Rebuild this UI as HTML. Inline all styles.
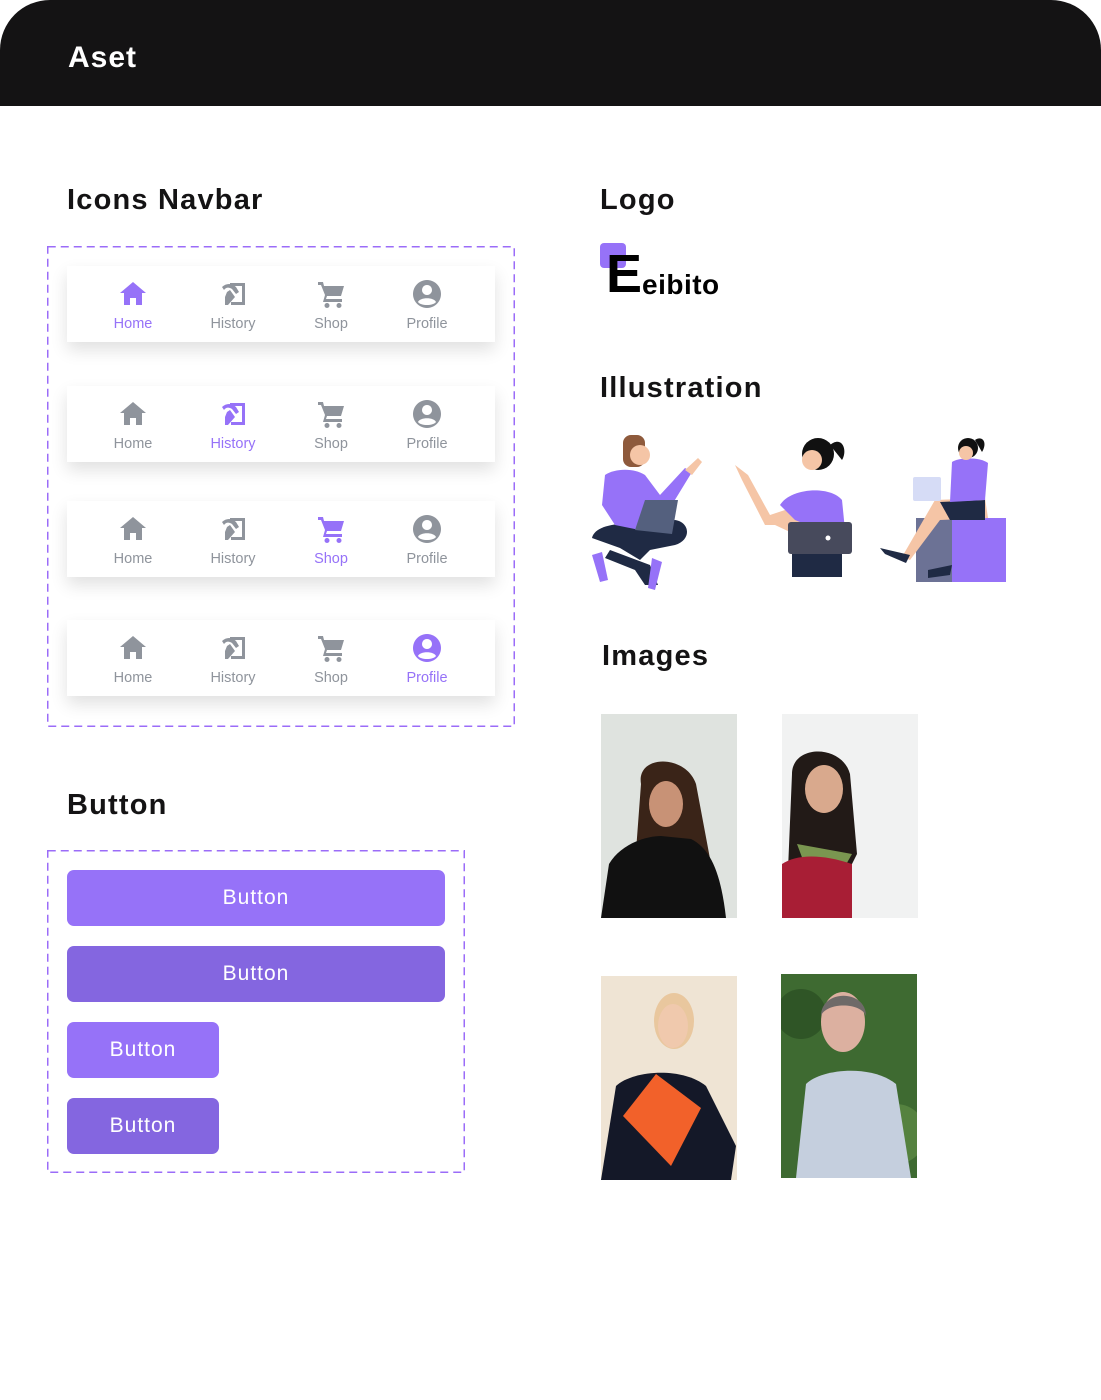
<!DOCTYPE html>
<html><head><meta charset="utf-8">
<style>
*{margin:0;padding:0;box-sizing:border-box}
body{width:1101px;height:1400px;background:#fff;font-family:"Liberation Sans","DejaVu Sans",sans-serif;position:relative;overflow:hidden}
.hdr{position:absolute;left:0;top:0;width:1101px;height:106px;background:#141314;border-radius:50px 50px 0 0}
.hdr span{position:absolute;left:68px;top:41px;color:#fff;font-size:30px;font-weight:600;letter-spacing:1px}
h2{position:absolute;font-size:29px;font-weight:600;color:#141314;letter-spacing:1.2px}
.nav{position:absolute;left:67px;width:428px;height:76px;background:#fff;box-shadow:0 8px 16px rgba(0,0,0,.12)}
.it{position:absolute;top:12px;width:80px;text-align:center;font-size:14.5px;color:#8f949c}
.it svg{display:block;margin:0 auto 6px;width:32px;height:32px}
.it.a{color:#9672f8}
.btn{position:absolute;left:67px;height:56px;border-radius:7px;color:#fff;font-size:21px;text-align:center;line-height:56px;letter-spacing:1px}
</style></head><body>
<div class="hdr"><span>Aset</span></div>
<h2 style="left:67px;top:184px">Icons Navbar</h2>
<h2 style="left:600px;top:184px">Logo</h2>
<h2 style="left:600px;top:372px">Illustration</h2>
<h2 style="left:602px;top:640px">Images</h2>
<h2 style="left:67px;top:789px">Button</h2>

<svg width="0" height="0" style="position:absolute">
<defs>
<g id="home"><path d="M16 4 L3 15 H7 V27 H13 V20 H19 V27 H25 V15 H29 Z"/></g>
<g id="hist"><path d="M13 5 H28 V27 H14 V24 H25 V8 H13 Z M5 9 C9 5 15 5 19 9 L22 14 L19 16 L15 11 C12 9 9 9 7 12 Z M10 14 L13 12 L18 19 L11 27 H8 V19 Z"/></g>
<g id="shop"><path d="M3 4 H8 L9 8 H29 L26 18 H12 L11 21 H27 V24 H8 L10 17 L6 7 H3 Z"/><circle cx="12" cy="27.5" r="2.5"/><circle cx="24" cy="27.5" r="2.5"/></g>
<g id="prof"><path fill-rule="evenodd" d="M16 2 A14 14 0 1 1 15.99 2 Z M16 7 A5 5 0 1 0 16.01 7 Z M7 24 C10 28 22 28 25 24 C23 19 9 19 7 24 Z"/></g>
</defs></svg>

<svg style="position:absolute;left:0;top:0" width="1101" height="1400">
 <rect x="47.75" y="246.75" width="466.5" height="479.5" fill="none" stroke="#9b6cf8" stroke-width="1.5" stroke-dasharray="8 5"/>
 <rect x="47.75" y="850.75" width="416.5" height="321.5" fill="none" stroke="#9b6cf8" stroke-width="1.5" stroke-dasharray="8 5"/>
</svg>

<div class="nav" style="top:266px">
 <div class="it a" style="left:26px"><svg viewBox="0 0 32 32" fill="#9672f8"><use href="#home"/></svg>Home</div>
 <div class="it" style="left:126px"><svg viewBox="0 0 32 32" fill="#8f949c"><use href="#hist"/></svg>History</div>
 <div class="it" style="left:224px"><svg viewBox="0 0 32 32" fill="#8f949c"><use href="#shop"/></svg>Shop</div>
 <div class="it" style="left:320px"><svg viewBox="0 0 32 32" fill="#8f949c"><use href="#prof"/></svg>Profile</div>
</div>
<div class="nav" style="top:386px">
 <div class="it" style="left:26px"><svg viewBox="0 0 32 32" fill="#8f949c"><use href="#home"/></svg>Home</div>
 <div class="it a" style="left:126px"><svg viewBox="0 0 32 32" fill="#9672f8"><use href="#hist"/></svg>History</div>
 <div class="it" style="left:224px"><svg viewBox="0 0 32 32" fill="#8f949c"><use href="#shop"/></svg>Shop</div>
 <div class="it" style="left:320px"><svg viewBox="0 0 32 32" fill="#8f949c"><use href="#prof"/></svg>Profile</div>
</div>
<div class="nav" style="top:501px">
 <div class="it" style="left:26px"><svg viewBox="0 0 32 32" fill="#8f949c"><use href="#home"/></svg>Home</div>
 <div class="it" style="left:126px"><svg viewBox="0 0 32 32" fill="#8f949c"><use href="#hist"/></svg>History</div>
 <div class="it a" style="left:224px"><svg viewBox="0 0 32 32" fill="#9672f8"><use href="#shop"/></svg>Shop</div>
 <div class="it" style="left:320px"><svg viewBox="0 0 32 32" fill="#8f949c"><use href="#prof"/></svg>Profile</div>
</div>
<div class="nav" style="top:620px">
 <div class="it" style="left:26px"><svg viewBox="0 0 32 32" fill="#8f949c"><use href="#home"/></svg>Home</div>
 <div class="it" style="left:126px"><svg viewBox="0 0 32 32" fill="#8f949c"><use href="#hist"/></svg>History</div>
 <div class="it" style="left:224px"><svg viewBox="0 0 32 32" fill="#8f949c"><use href="#shop"/></svg>Shop</div>
 <div class="it a" style="left:320px"><svg viewBox="0 0 32 32" fill="#9672f8"><use href="#prof"/></svg>Profile</div>
</div>

<div class="btn" style="top:870px;width:378px;background:#9672f8">Button</div>
<div class="btn" style="top:946px;width:378px;background:#8466e0">Button</div>
<div class="btn" style="top:1022px;width:152px;background:#9672f8">Button</div>
<div class="btn" style="top:1098px;width:152px;background:#8466e0">Button</div>

<!-- logo -->
<div style="position:absolute;left:600px;top:243px;width:26px;height:25px;background:#9672f8;border-radius:4px"></div>
<div style="position:absolute;left:606px;top:246px;font-size:54px;font-weight:700;color:#000;line-height:56px">E</div>
<div style="position:absolute;left:642px;top:269px;font-size:28px;font-weight:600;color:#000;letter-spacing:.5px">eibito</div>

<!-- illustrations -->
<svg style="position:absolute;left:580px;top:430px" width="440" height="165" viewBox="0 0 440 165">
 <path d="M12 108 C15 95 40 92 60 95 L95 90 C110 92 112 110 95 115 L70 120 L60 130 L40 118 Z" fill="#1f2a44"/>
 <path d="M30 120 L70 135 L78 155 L65 155 L55 140 L25 128 Z" fill="#1f2a44"/>
 <path d="M12 125 L22 122 L28 150 L20 152 Z" fill="#9672f8"/>
 <path d="M72 128 L82 132 L75 160 L68 158 Z" fill="#9672f8"/>
 <path d="M25 45 C35 38 55 38 65 45 L80 65 L105 38 L112 42 L90 78 L60 100 L35 95 L22 75 Z" fill="#9672f8"/>
 <rect x="43" y="5" width="22" height="32" rx="8" fill="#8e5a3c"/>
 <circle cx="60" cy="25" r="10" fill="#f5c5a6"/>
 <path d="M105 40 L118 28 L122 32 L112 45 Z" fill="#f5c5a6"/>
 <path d="M55 100 L65 70 L98 70 L92 104 Z" fill="#54607e"/>
 <path d="M155 35 L168 45 L190 85 L205 80 L210 75 C215 60 245 60 258 70 L262 92 L255 100 L210 102 L195 95 L185 95 L162 50 Z" fill="#f5c5a6"/>
 <path d="M200 75 C210 58 250 55 262 70 L265 100 L240 100 L215 90 Z" fill="#9672f8"/>
 <rect x="212" y="105" width="50" height="42" fill="#1f2a44"/>
 <rect x="208" y="92" width="64" height="32" rx="3" fill="#474a5c"/>
 <circle cx="248" cy="108" r="2.5" fill="#fff"/>
 <circle cx="238" cy="24" r="16" fill="#111"/>
 <path d="M250 15 C262 5 268 20 262 30 Z" fill="#111"/>
 <circle cx="232" cy="30" r="10" fill="#f5c5a6"/>
 <rect x="336" y="88" width="90" height="64" fill="#9672f8"/>
 <rect x="336" y="88" width="36" height="64" fill="#6c7295"/>
 <path d="M355 70 L405 68 L408 88 L360 90 L330 130 L322 127 Z" fill="#f5c5a6"/>
 <path d="M360 72 L405 70 L405 90 L370 90 Z" fill="#1f2a44"/>
 <path d="M300 118 L330 125 L326 133 L305 124 Z" fill="#1f2a44"/>
 <path d="M348 140 L372 135 L370 145 L348 148 Z" fill="#1f2a44"/>
 <path d="M372 32 C380 27 400 27 408 33 L405 70 L370 72 Z" fill="#9672f8"/>
 <rect x="333" y="47" width="28" height="24" rx="2" fill="#d6dcf6"/>
 <circle cx="388" cy="18" r="10" fill="#111"/>
 <path d="M395 10 C402 5 408 12 402 22 Z" fill="#111"/>
 <circle cx="386" cy="23" r="7" fill="#f5c5a6"/>
</svg>

<!-- photos -->
<svg style="position:absolute;left:601px;top:714px" width="136" height="204" viewBox="0 0 136 204">
 <rect width="136" height="204" fill="#dfe3df"/>
 <path d="M40 70 C35 40 85 40 95 70 L110 150 L118 204 L30 204 Z" fill="#3a2418"/>
 <path d="M0 204 L8 150 C20 130 45 122 60 122 L90 125 C110 135 120 160 125 204 Z" fill="#111"/>
 <ellipse cx="65" cy="90" rx="17" ry="23" fill="#c89276"/>
</svg>
<svg style="position:absolute;left:782px;top:714px" width="136" height="204" viewBox="0 0 136 204">
 <rect width="136" height="204" fill="#f1f2f2"/>
 <path d="M10 60 C10 30 60 30 68 60 L75 140 L55 180 L5 180 Z" fill="#221a17"/>
 <path d="M15 130 L30 170 L50 175 L70 140 Z" fill="#7a9650"/>
 <path d="M0 204 L0 150 C15 140 40 140 70 150 L70 204 Z" fill="#a81e35"/>
 <ellipse cx="42" cy="75" rx="19" ry="24" fill="#d9a98d"/>
</svg>
<svg style="position:absolute;left:601px;top:976px" width="136" height="204" viewBox="0 0 136 204">
 <rect width="136" height="204" fill="#efe4d4"/>
 <path d="M0 204 L15 110 C30 95 80 90 105 110 L135 170 L130 204 Z" fill="#141828"/>
 <ellipse cx="73" cy="45" rx="20" ry="28" fill="#e9c79e"/>
 <ellipse cx="72" cy="50" rx="15" ry="22" fill="#f0c9ad"/>
 <path d="M22 140 L55 98 L100 132 L70 190 Z" fill="#f2612a"/>
</svg>
<svg style="position:absolute;left:781px;top:974px" width="136" height="204" viewBox="0 0 136 204">
 <rect width="136" height="204" fill="#3e6a31"/>
 <circle cx="20" cy="40" r="25" fill="#2f5526"/><circle cx="115" cy="160" r="30" fill="#55823f"/>
 <path d="M15 204 L25 110 C40 95 90 90 115 110 L130 204 Z" fill="#c5cfde"/>
 <ellipse cx="62" cy="48" rx="22" ry="30" fill="#dcb0a0"/>
 <path d="M40 42 C40 15 85 15 85 42 C80 28 45 28 40 42 Z" fill="#6e6a68"/>
</svg>
</body></html>
